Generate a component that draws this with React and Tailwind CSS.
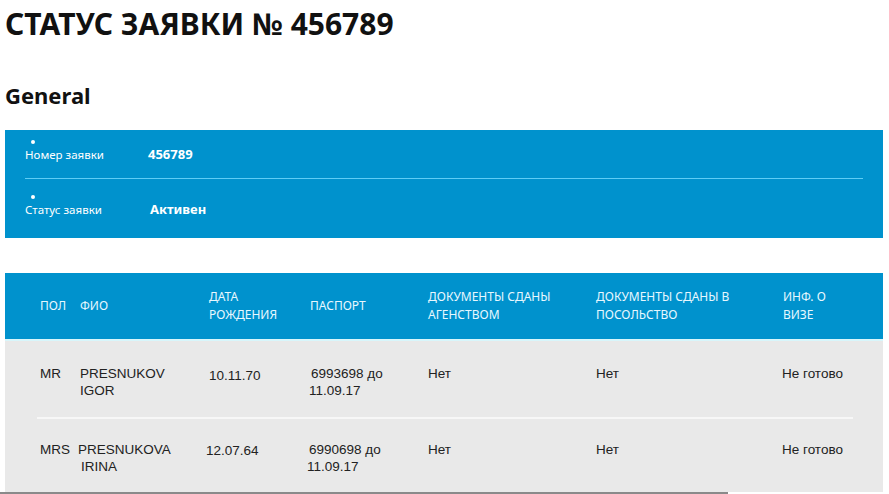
import React from "react";

const headFont = { fontFamily: '"Noto Sans", "Open Sans", sans-serif' };

function Label({ children }) {
  return (
    <div className="relative w-[123px] text-[11.5px] text-white" style={headFont}>
      <span className="absolute left-[6px] top-[-6px] h-[4px] w-[4px] rounded-full bg-white"></span>
      {children}
    </div>
  );
}

const cols = "grid grid-cols-[40px_129px_101px_118px_168px_187px_1fr]";

const rows = [
  {
    t: "MR",
    n: ["PRESNUKOV", "IGOR"],
    d: "10.11.70",
    p: ["6993698 до", "11.09.17"],
    nOff: "",
    dOff: "mt-[2px]",
    pOff: "",
  },
  {
    t: "MRS",
    n: ["PRESNUKOVA", "IRINA"],
    d: "12.07.64",
    p: ["6990698 до", "11.09.17"],
    nOff: "-ml-[2px]",
    dOff: "-ml-[3px]",
    pOff: "-ml-[2px]",
  },
];

export default function App() {
  return (
    <div className="w-[889px] h-[494px] overflow-hidden bg-white relative">
      <h1
        className="pl-[5px] pt-[6px] text-[30px] font-bold leading-[36px] text-[#111]"
        style={headFont}
      >
        СТАТУС ЗАЯВКИ № 456789
      </h1>
      <h2
        className="pl-[5px] mt-[41px] text-[22px] font-bold leading-[24px] text-[#111]"
        style={headFont}
      >
        General
      </h2>

      <div className="ml-[5px] mt-[23px] w-[878px] h-[108px] bg-[#0092cd] px-[20px]">
        <div className="flex items-center h-[48px] pt-[2px]">
          <Label>Номер заявки</Label>
          <div className="text-[13px] font-bold text-white" style={headFont}>456789</div>
        </div>
        <div className="h-px bg-[#5fcdf5]"></div>
        <div className="flex items-center h-[59px] pt-[2px]">
          <Label>Статус заявки</Label>
          <div className="ml-[2px] text-[13px] font-bold text-white" style={headFont}>Активен</div>
        </div>
      </div>

      <div className="ml-[5px] mt-[35px] w-[878px]">
        <div
          className={`${cols} items-center h-[66px] bg-[#0092cd] pl-[35px] text-[12px] leading-[18px] text-[#e8f8ff] uppercase`}
          style={headFont}
        >
          <div>ПОЛ</div>
          <div>ФИО</div>
          <div>Дата<br />рождения</div>
          <div>Паспорт</div>
          <div>Документы сданы<br />агенством</div>
          <div>Документы сданы в<br />посольство</div>
          <div>Инф. о<br />визе</div>
        </div>
        <div className="h-[2px] bg-[#d8f6fb]"></div>
        <div
          className="bg-[#e9e9e9] h-[151px] text-[13.5px] leading-[17px] text-[#222]"
          style={{ fontFamily: '"Liberation Sans", Arial, sans-serif' }}
        >
          {rows.map((r, i) => (
            <React.Fragment key={i}>
              {i > 0 && <div className="ml-[32px] mr-[30px] h-[2px] bg-[#f7f7f7]"></div>}
              <div className={`${cols} pl-[35px] ${i === 0 ? "pt-[24px] h-[76px]" : "pt-[22px] h-[73px]"}`}>
                <div>{r.t}</div>
                <div className={r.nOff}>
                  <div>{r.n[0]}</div>
                  <div className={i === 1 ? "ml-[3px]" : ""}>{r.n[1]}</div>
                </div>
                <div className={`mt-[1px] ${r.dOff}`}>{r.d}</div>
                <div className={r.pOff}>
                  <div className="ml-[1px]">{r.p[0]}</div>
                  <div className="-ml-[1px]">{r.p[1]}</div>
                </div>
                <div>Нет</div>
                <div>Нет</div>
                <div className="-ml-[1px]">Не готово</div>
              </div>
            </React.Fragment>
          ))}
        </div>
      </div>
      <div className="absolute left-0 bottom-0 w-[728px] h-[2px] bg-[#8a8a8a]"></div>
    </div>
  );
}
